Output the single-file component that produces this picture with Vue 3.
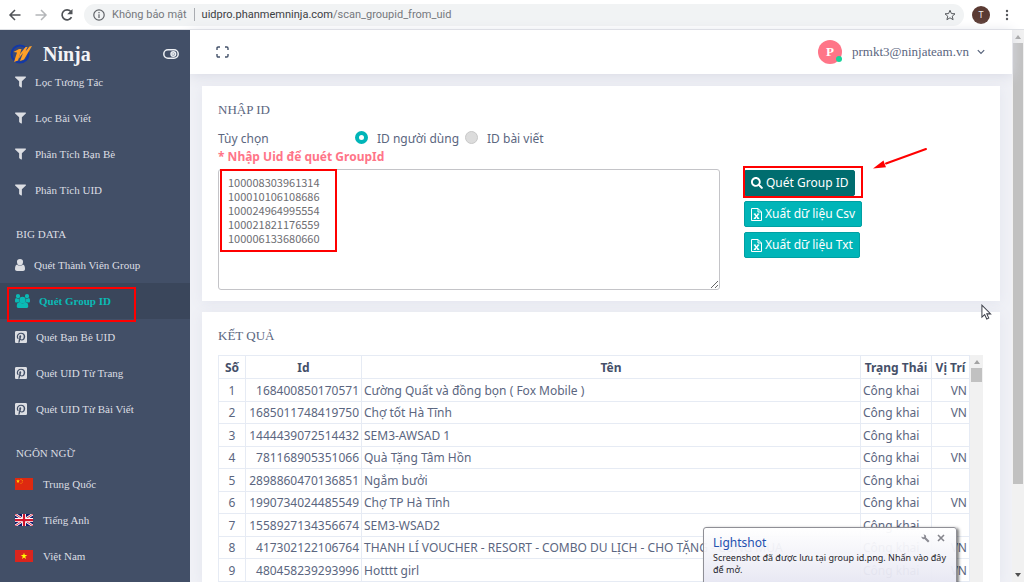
<script setup>
import { ref } from 'vue'

const paths = {
  filter: {
    box: '0 0 512 512',
    d: 'M487.976 0H24.028C2.71 0-8.047 25.866 7.058 40.971L192 225.941V432c0 7.831 3.821 15.17 10.237 19.662l80 55.98C298.02 518.69 320 507.493 320 487.98V225.941l184.947-184.97C520.021 25.896 509.338 0 487.976 0z'
  },
  user: {
    box: '0 0 20 24',
    d: 'M10 0a6 6 0 0 1 6 6.500c0 3.500-2.600 6.500-6 6.500s-6-3-6-6.500A6 6 0 0 1 10 0zM4.500 11C6 13 7.800 13.800 10 13.800s4-.8 5.500-2.800c3 .5 4.500 3.500 4.500 9 0 2.500-1.500 4-4 4H4c-2.500 0-4-1.500-4-4 0-5.500 1.500-8.500 4.500-9z'
  },
  users: {
    box: '0 0 30 28',
    d: 'M15 5.500a6.300 6.300 0 1 1 0 12.600 6.300 6.300 0 0 1 0-12.600zM9.500 16.200c1.500 1.700 3.500 2.500 5.500 2.500s4-.8 5.500-2.500c4.500 0 6 4.500 6 8.300 0 2.200-1.500 3.500-3.500 3.500H7c-2 0-3.500-1.300-3.500-3.500 0-3.800 1.500-8.300 6-8.300zM6 0a4.300 4.300 0 1 1 0 8.600A4.300 4.300 0 0 1 6 0zM24 0a4.300 4.300 0 1 1 0 8.600A4.300 4.300 0 0 1 24 0zM2.200 8c2 1.500 3.900 1.700 5.800 1C7.500 11.500 8 13.800 9 15.300c-2 0-3.400.6-4.400 1.900H2.700C1 17.200 0 16.200 0 14.400 0 11.700.2 8.700 2.200 8zM27.800 8c-2 1.500-3.900 1.700-5.800 1 .5 2.500 0 4.800-1 6.300 2 0 3.400.6 4.400 1.900h1.900c1.700 0 2.700-1 2.700-2.800 0-2.700-.2-5.700-2.200-6.400z'
  },
  pin: {
    box: '0 32 448 448',
    d: 'M448 80v352c0 26.5-21.5 48-48 48H154.400c9.800-16.400 22.400-40 27.400-59.300 3-11.500 15.300-58.400 15.300-58.400 8 15.300 31.400 28.200 56.300 28.200 74.100 0 127.400-68.100 127.400-152.700 0-81.100-66.200-141.800-151.400-141.800-106 0-162.200 71.100-162.200 148.600 0 36 19.200 80.800 49.800 95.100 4.700 2.200 7.100 1.200 8.200-3.300.8-3.400 5-20.100 6.800-27.800.6-2.500.3-4.600-1.700-7-10.100-12.300-18.300-34.900-18.300-56 0-54.200 41-106.600 110.900-106.600 60.300 0 102.600 41.100 102.600 99.900 0 66.400-33.500 112.400-77.200 112.400-24.100 0-42.100-19.900-36.400-44.400 6.900-29.200 20.300-60.700 20.300-81.800 0-53-75.500-45.700-75.500 25 0 21.700 7.300 36.500 7.300 36.500-31.400 132.800-36.100 134.500-29.600 192.600l2.200.8H48c-26.500 0-48-21.500-48-48V80c0-26.500 21.500-48 48-48h352c26.500 0 48 21.500 48 48z'
  }
}

const filters = ['Lọc Tương Tác', 'Lọc Bài Viết', 'Phân Tích Bạn Bè', 'Phân Tích UID'].map((text) => ({ text, icon: 'filter' }))
const bigData = [
  { text: 'Quét Thành Viên Group', icon: 'user' },
  { text: 'Quét Group ID', icon: 'users', active: true },
  { text: 'Quét Bạn Bè UID', icon: 'pin' },
  { text: 'Quét UID Từ Trang', icon: 'pin' },
  { text: 'Quét UID Từ Bài Viết', icon: 'pin' }
]

const rows = [
  ['168400850170571', 'Cường Quất và đồng bọn ( Fox Mobile )', 'VN'],
  ['1685011748419750', 'Chợ tốt Hà Tĩnh', 'VN'],
  ['1444439072514432', 'SEM3-AWSAD 1', ''],
  ['781168905351066', 'Quà Tặng Tâm Hồn', 'VN'],
  ['2898860470136851', 'Ngắm bưởi', ''],
  ['1990734024485549', 'Chợ TP Hà Tĩnh', 'VN'],
  ['1558927134356674', 'SEM3-WSAD2', ''],
  ['417302122106764', 'THANH LÍ VOUCHER - RESORT - COMBO DU LỊCH - CHO TẶNG - CÙNG MUA', 'VN'],
  ['480458239293996', 'Hotttt girl', 'VN']
]

const mode = ref('user')
const ids = ref('100008303961314\n100010106108686\n100024964995554\n100021821176559\n100006133680660')
</script>

<template>
  <div class="window">
    <header class="browser">
      <button class="plain" aria-label="Back">
        <svg width="14" height="14" viewBox="0 0 14 14" fill="none" stroke="#505357" stroke-width="1.500"><path d="M12.500 7H2M7 2L2 7l5 5" /></svg>
      </button>
      <button class="plain" aria-label="Forward">
        <svg width="14" height="14" viewBox="0 0 14 14" fill="none" stroke="#b4b6b9" stroke-width="1.500"><path d="M1.500 7H12M7 2l5 5-5 5" /></svg>
      </button>
      <button class="plain" aria-label="Reload">
        <svg width="14" height="14" viewBox="0 0 14 14"><path d="M11.500 9.200A5 5 0 1 1 10.800 3.500" fill="none" stroke="#505357" stroke-width="1.700" /><path d="M12.500 1v5.300H7.200z" fill="#505357" /></svg>
      </button>
      <div class="address">
        <svg width="12" height="12" viewBox="0 0 12 12"><circle cx="6" cy="6" r="5.200" fill="none" stroke="#606368" stroke-width="1.200" /><path d="M5.400 5.200h1.200v3.700H5.400zM5.400 3h1.200v1.200H5.400z" fill="#606368" /></svg>
        <span class="insecure">Không bảo mật</span>
        <span class="bar"></span>
        <span class="url">uidpro.phanmemninja.com<span class="path">/scan_groupid_from_uid</span></span>
        <button class="plain star" aria-label="Bookmark">
          <svg width="12" height="12" viewBox="0 0 24 24" fill="none" stroke="#55585c" stroke-width="2"><path d="M12 2.500l2.800 6.600 7.200.6-5.500 4.700 1.700 7-6.200-3.800-6.200 3.800 1.700-7L2 9.700l7.200-.6z" /></svg>
        </button>
      </div>
      <span class="profile">T</span>
      <button class="plain" aria-label="Menu">
        <svg width="4" height="12" viewBox="0 0 4 12" fill="#55585c"><circle cx="2" cy="2" r="1.200" /><circle cx="2" cy="6" r="1.200" /><circle cx="2" cy="10" r="1.200" /></svg>
      </button>
    </header>

    <div class="page">
      <aside class="sidebar">
        <div class="brand">
          <svg width="22" height="20" viewBox="0 0 44 40">
            <circle cx="20" cy="20" r="17" fill="#37487a" stroke="#1238a8" stroke-width="4" />
            <path d="M7 16l11-6h5l-7 23-8 3 6-19z" fill="#ff9c22" />
            <path d="M20 20L31 6h4l-4 9 8-10 5-1L28 31l-8 3 6-16-9 12z" fill="#ffa02a" />
          </svg>
          <strong class="name">Ninja</strong>
          <button class="plain" aria-label="Toggle sidebar">
            <svg width="16" height="10" viewBox="0 0 16 10" fill="none" stroke="#edf0f4" stroke-width="1.500"><rect x=".8" y=".8" width="14.400" height="8.400" rx="4.200" /><circle cx="10.300" cy="5" r="2.300" /><circle cx="10.300" cy="5" r=".5" /></svg>
          </button>
        </div>
        <nav>
          <a v-for="item in filters" :key="item.text" class="item" href="#">
            <svg class="icon filter" :viewBox="paths[item.icon].box"><path :d="paths[item.icon].d" /></svg>
            {{ item.text }}
          </a>
          <h2 class="group">BIG DATA</h2>
          <a v-for="item in bigData" :key="item.text" class="item" :class="{ active: item.active }" href="#">
            <svg class="icon" :class="item.icon" :viewBox="paths[item.icon].box"><path :d="paths[item.icon].d" /></svg>
            {{ item.text }}
            <span v-if="item.active" class="mark mark-nav"></span>
          </a>
          <h2 class="group">NGÔN NGỮ</h2>
          <a class="item lang" href="#">
            <svg class="flag" viewBox="0 0 36 24"><path fill="#de2910" d="M0 0h36v24H0z" /><path fill="#ffde00" d="M6 2.500l1 2.700h2.800L7.500 7l.9 2.800L6 8.100 3.600 9.800l.9-2.800-2.300-1.800H5z" /><circle cx="12" cy="2.500" r="1" fill="#ffae00" /><circle cx="14.500" cy="5" r="1" fill="#ffae00" /><circle cx="14.500" cy="8" r="1" fill="#ffae00" /><circle cx="12" cy="10.500" r="1" fill="#ffae00" /></svg>
            Trung Quốc
          </a>
          <a class="item lang" href="#">
            <svg class="flag" viewBox="0 0 36 24"><path fill="#101a6b" d="M0 0h36v24H0z" /><path d="M0 0l36 24M36 0L0 24" stroke="#fff" stroke-width="5" /><path d="M0 0l36 24M36 0L0 24" stroke="#d0142c" stroke-width="1.800" /><path d="M18 0v24M0 12h36" stroke="#fff" stroke-width="8" /><path d="M18 0v24M0 12h36" stroke="#d0142c" stroke-width="4.500" /></svg>
            Tiếng Anh
          </a>
          <a class="item lang" href="#">
            <svg class="flag" viewBox="0 0 36 24"><path fill="#da251d" d="M0 0h36v24H0z" /><path fill="#ff0" d="M18 5.500l1.600 4.700h4.900l-4 2.900 1.500 4.700-4-2.900-4 2.900 1.500-4.700-4-2.900h4.900z" /></svg>
            Việt Nam
          </a>
        </nav>
      </aside>

      <main class="main">
        <div class="topbar">
          <button class="plain" aria-label="Fullscreen">
            <svg width="13" height="12" viewBox="0 0 13 12" fill="none" stroke="#44526a" stroke-width="1.400"><path d="M1 4V2.200Q1 1 2.200 1H4M9 1h1.800Q12 1 12 2.200V4M12 8v1.800Q12 11 10.800 11H9M4 11H2.200Q1 11 1 9.800V8" /></svg>
          </button>
          <button class="plain account">
            <span class="avatar">P<span class="online"></span></span>
            <span>prmkt3@ninjateam.vn</span>
            <svg width="8" height="6" viewBox="0 0 8 6" fill="none" stroke="#55617a" stroke-width="1.200"><path d="M.8 1.200L4 4.400l3.200-3.200" /></svg>
          </button>
        </div>

        <div class="content">
          <section class="card">
            <h3 class="title">NHẬP ID</h3>
            <div class="options">
              <span class="option-label">Tùy chọn</span>
              <label class="option"><input v-model="mode" type="radio" name="mode" value="user" />ID người dùng</label>
              <label class="option"><input v-model="mode" type="radio" name="mode" value="post" />ID bài viết</label>
            </div>
            <label class="required" for="ids">* Nhập Uid để quét GroupId</label>
            <div class="form">
              <div class="area">
                <textarea id="ids" v-model="ids" spellcheck="false"></textarea>
                <span class="mark mark-ids"></span>
              </div>
              <div class="actions">
                <button class="btn scan">
                  <svg width="12" height="12" viewBox="0 0 512 512" fill="#fff"><path d="M505 442.700L405.300 343c-4.500-4.500-10.600-7-17-7H372c27.600-35.300 44-79.700 44-128C416 93.100 322.900 0 208 0S0 93.100 0 208s93.100 208 208 208c48.300 0 92.700-16.400 128-44v16.300c0 6.400 2.500 12.500 7 17l99.700 99.700c9.400 9.400 24.600 9.400 33.900 0l28.300-28.300c9.400-9.400 9.400-24.600.1-34zM208 336c-70.700 0-128-57.200-128-128 0-70.700 57.200-128 128-128 70.700 0 128 57.200 128 128 0 70.700-57.200 128-128 128z" /></svg>
                  Quét Group ID
                </button>
                <button v-for="kind in ['Csv', 'Txt']" :key="kind" class="btn">
                  <svg width="11" height="13" viewBox="0 0 22 26" fill="none" stroke="#fff" stroke-width="2"><path d="M1 1h13l7 7v17H1zM14 1v7h7" /><path stroke-width="2.600" d="M7 12l8 9M15 12l-8 9" /><path d="M5.500 12h4M12.500 12h4M5.500 21h4M12.500 21h4" /></svg>
                  Xuất dữ liệu {{ kind }}
                </button>
                <span class="mark mark-scan"></span>
                <svg class="arrow" width="56" height="24" viewBox="0 0 56 24"><path d="M54 2L14 16.500" stroke="#f00" stroke-width="2" stroke-linecap="round" /><path d="M1 21.500l10.500-8 1 3 1.500 3.800z" fill="#f00" /></svg>
              </div>
            </div>
          </section>

          <section class="card results">
            <h3 class="title">KẾT QUẢ</h3>
            <div class="scroller">
              <table>
                <colgroup><col class="c-no" /><col class="c-id" /><col /><col class="c-state" /><col class="c-place" /></colgroup>
                <thead>
                  <tr><th>Số</th><th>Id</th><th>Tên</th><th>Trạng Thái</th><th>Vị Trí</th></tr>
                </thead>
                <tbody>
                  <tr v-for="(row, i) in rows" :key="row[0]">
                    <td class="center">{{ i + 1 }}</td>
                    <td class="right">{{ row[0] }}</td>
                    <td>{{ row[1] }}</td>
                    <td>Công khai</td>
                    <td class="right">{{ row[2] }}</td>
                  </tr>
                  <tr><td></td><td></td><td></td><td></td><td></td></tr>
                </tbody>
              </table>
              <div class="track inner">
                <svg width="6" height="4" viewBox="0 0 6 4" fill="#a3a3a3"><path d="M0 4l3-4 3 4z" /></svg>
                <div class="thumb"></div>
              </div>
            </div>
          </section>
        </div>
        <svg class="cursor" width="11" height="17" viewBox="0 0 12 18" fill="#fff" stroke="#3c3f49" stroke-width="1.100"><path d="M1 1v13l3-2.700 2.300 4.800 2.200-1-2.200-4.600H10.500z" /></svg>
      </main>

      <div class="track outer">
        <svg width="6" height="4" viewBox="0 0 6 4" fill="#a3a3a3"><path d="M0 4l3-4 3 4z" /></svg>
        <div class="thumb"></div>
        <svg width="6" height="4" viewBox="0 0 6 4" fill="#505050"><path d="M0 0l3 4 3-4z" /></svg>
      </div>
    </div>

    <aside class="toast">
      <div class="toast-head">
        <strong class="toast-title">Lightshot</strong>
        <button class="plain" aria-label="Settings">
          <svg width="9" height="9" viewBox="0 0 18 18"><path d="M1 5a4.500 4.500 0 0 0 6 5l7 7 3-3-7-7A4.500 4.500 0 0 0 5 1l2 3.500L4.500 7z" fill="#8b8b93" /></svg>
        </button>
        <button class="plain" aria-label="Close">
          <svg width="8" height="8" viewBox="0 0 8 8" stroke="#85858c" stroke-width="1.600"><path d="M1 1l6 6M7 1L1 7" /></svg>
        </button>
      </div>
      <p>Screenshot đã được lưu tại group id.png. Nhấn vào đây để mở.</p>
    </aside>
  </div>
</template>

<style>
body {
  margin: 0;
  overflow: hidden;
}
</style>

<style scoped>
* {
  box-sizing: border-box;
}

.window {
  position: relative;
  display: flex;
  flex-direction: column;
  height: 100vh;
  overflow: hidden;
  background: #fff;
  color: #5b6680;
  font: 12px/18px "Noto Sans", sans-serif;
}

.plain {
  display: flex;
  align-items: center;
  padding: 0;
  border: 0;
  background: none;
  color: inherit;
  font: inherit;
}

svg {
  flex: none;
  display: block;
}

.browser {
  flex: none;
  display: flex;
  align-items: center;
  gap: 12px;
  height: 30px;
  padding: 0 15px 0 8px;
  border-bottom: 1px solid #dfe1e5;
}

.address {
  flex: 1;
  display: flex;
  align-items: center;
  gap: 7px;
  height: 22px;
  margin: 0 -4px 0 -2px;
  padding: 0 8px 0 9px;
  border-radius: 11px;
  background: #f1f3f4;
  color: #3c4043;
  font: 11px/18px Roboto, sans-serif;
}

.insecure,
.path {
  color: #75787d;
}

.bar {
  width: 1px;
  height: 13px;
  background: #a9acb1;
}

.star {
  margin-left: auto;
}

.profile {
  width: 18px;
  height: 18px;
  margin-right: 3px;
  border-radius: 50%;
  background: #5a3a33;
  color: #eee;
  font-size: 9px;
  text-align: center;
}

.page {
  flex: 1;
  display: flex;
  min-height: 0;
}

.sidebar {
  position: relative;
  z-index: 1;
  flex: none;
  width: 190px;
  background: #424f67;
  color: #dcdee3;
  font: 11px/18px "Liberation Serif", serif;
}

.brand {
  display: flex;
  align-items: center;
  height: 34px;
  padding: 14px 11px 0 10px;
}

.name {
  flex: 1;
  margin-left: 11px;
  color: #f3f4f6;
  font-size: 20px;
  line-height: 20px;
}

.item {
  position: relative;
  display: flex;
  align-items: center;
  gap: 9px;
  height: 36px;
  padding-left: 15px;
  color: inherit;
  text-decoration: none;
}

.item.active {
  background: #3a465b;
  color: #0abab5;
  font-weight: bold;
}

.icon {
  height: 12px;
  fill: currentColor;
}

.filter {
  width: 11px;
}

.user {
  width: 10px;
}

.users {
  width: 15px;
  height: 14px;
}

.pin {
  width: 12px;
}

.lang {
  gap: 10px;
}

.flag {
  width: 18px;
  height: 12px;
}

.group {
  height: 39px;
  margin: 0;
  padding: 17px 0 0 16px;
  font-size: 11px;
  line-height: 18px;
  font-weight: normal;
}

.mark {
  position: absolute;
  border: 2px solid #f00;
  pointer-events: none;
}

.mark-nav {
  top: 4px;
  left: 7px;
  width: 129px;
  height: 35px;
  z-index: 1;
}

.main {
  position: relative;
  flex: 1;
  display: flex;
  flex-direction: column;
  min-width: 0;
  background: #f0f1f6;
}

.topbar {
  flex: none;
  display: flex;
  align-items: center;
  justify-content: space-between;
  height: 44px;
  padding: 0 27px 0 26px;
  background: #fff;
  box-shadow: 0 2px 12px #d9dbe5;
  font: 13px/18px "Liberation Serif", serif;
}

.account {
  gap: 8px;
}

.avatar {
  position: relative;
  width: 24px;
  height: 24px;
  margin-right: 2px;
  border-radius: 50%;
  background: #ff7588;
  color: #fff;
  font-weight: bold;
  line-height: 24px;
  text-align: center;
}

.online {
  position: absolute;
  right: 0;
  bottom: 2px;
  width: 6px;
  height: 6px;
  border-radius: 50%;
  background: #16d39a;
}

.content {
  flex: 1;
  display: flex;
  flex-direction: column;
  gap: 11px;
  min-height: 0;
  padding: 12px 12px 0;
}

.card {
  padding: 14px 16px 11px;
  background: #fff;
  box-shadow: 0 2px 12px #e3e5ee;
}

.title {
  margin: 0;
  font: 13px/20px "Liberation Serif", serif;
}

.options {
  display: flex;
  align-items: center;
  gap: 6px;
  height: 18px;
  margin-top: 10px;
}

.option-label {
  width: 131px;
}

.option {
  display: flex;
  align-items: center;
}

.option input {
  appearance: none;
  width: 13px;
  height: 13px;
  margin: 0 9px 3px 0;
  border-radius: 50%;
  border: 1px solid #c8c8c8;
  background: #dcdcdc;
}

.option input:checked {
  border: 4px solid #00b5b8;
  background: #fff;
}

.required {
  display: block;
  color: #ff7588;
  font-weight: bold;
}

.form {
  display: grid;
  grid-template-columns: 502fr 240fr;
  gap: 24px;
  margin-top: 3px;
}

.area {
  position: relative;
}

textarea {
  display: block;
  width: 100%;
  height: 121px;
  padding: 5px 9px;
  border: 1px solid #c4c4c8;
  border-radius: 3px;
  background: #fff;
  color: #6d6d72;
  font: 11px/14px "Noto Sans CJK SC", sans-serif;
}

.mark-ids {
  top: 0;
  left: 2px;
  width: 117px;
  height: 83px;
}

.actions {
  position: relative;
  display: flex;
  flex-direction: column;
  align-items: flex-start;
  gap: 5px;
  padding-top: 1px;
}

.btn {
  display: flex;
  align-items: center;
  gap: 3px;
  height: 26px;
  padding: 0 6px;
  border: 1px solid #00a0a3;
  border-radius: 2px;
  background: #00b5b8;
  color: #fff;
  font: 12px/18px "Noto Sans", sans-serif;
}

.btn.scan {
  border-color: #006d6f;
  background: #006d6f;
}

.mark-scan {
  top: -3px;
  left: -1px;
  width: 120px;
  height: 32px;
}

.arrow {
  position: absolute;
  top: -22px;
  left: 128px;
}

.results {
  flex: 1;
  min-height: 0;
  padding: 14px 17px 0 16px;
}

.scroller {
  display: flex;
  height: 100%;
  margin-top: 9px;
}

table {
  flex: 1;
  align-self: flex-start;
  table-layout: fixed;
  width: 100%;
  border-collapse: collapse;
}

.c-no {
  width: 27px;
}

.c-id {
  width: 116px;
}

.c-state {
  width: 71px;
}

.c-place {
  width: 38px;
}

th,
td {
  padding: 1px 2px 0;
  border: 1px solid #e6ebf4;
  line-height: 18px;
  text-align: left;
  white-space: nowrap;
}

tr {
  height: 23px;
}

tbody tr:nth-child(even) {
  height: 22px;
}

th {
  color: #455069;
  text-align: center;
}

.center {
  text-align: center;
}

.right {
  text-align: right;
}

.track {
  flex: none;
  display: flex;
  flex-direction: column;
  align-items: center;
  background: #f1f1f1;
}

.thumb {
  background: #c1c1c1;
}

.inner {
  width: 13px;
  padding-top: 5px;
}

.inner .thumb {
  width: 11px;
  height: 14px;
  margin-top: 4px;
}

.outer {
  justify-content: space-between;
  width: 12px;
  padding: 5px 0;
}

.outer .thumb {
  width: 10px;
  height: 441px;
  margin: 4px 0 auto;
}

.cursor {
  position: absolute;
  top: 274px;
  right: 20px;
}

.toast {
  position: absolute;
  right: 67px;
  bottom: -8px;
  z-index: 2;
  width: 254px;
  height: 63px;
  padding: 6px 9px;
  border: 1px solid #8f8f96;
  border-radius: 3px;
  background: linear-gradient(#fffffff2, #e4e4f1f2);
  box-shadow: 2px 1px 3px #00000080;
  color: #26262b;
  font-size: 9px;
  line-height: 12px;
}

.toast-head {
  display: flex;
  align-items: flex-start;
  gap: 7px;
  height: 18px;
  padding-right: 2px;
}

.toast-title {
  flex: 1;
  color: #2350b0;
  font-size: 12px;
  font-weight: normal;
  line-height: 18px;
}

.toast p {
  margin: 0;
}
</style>
